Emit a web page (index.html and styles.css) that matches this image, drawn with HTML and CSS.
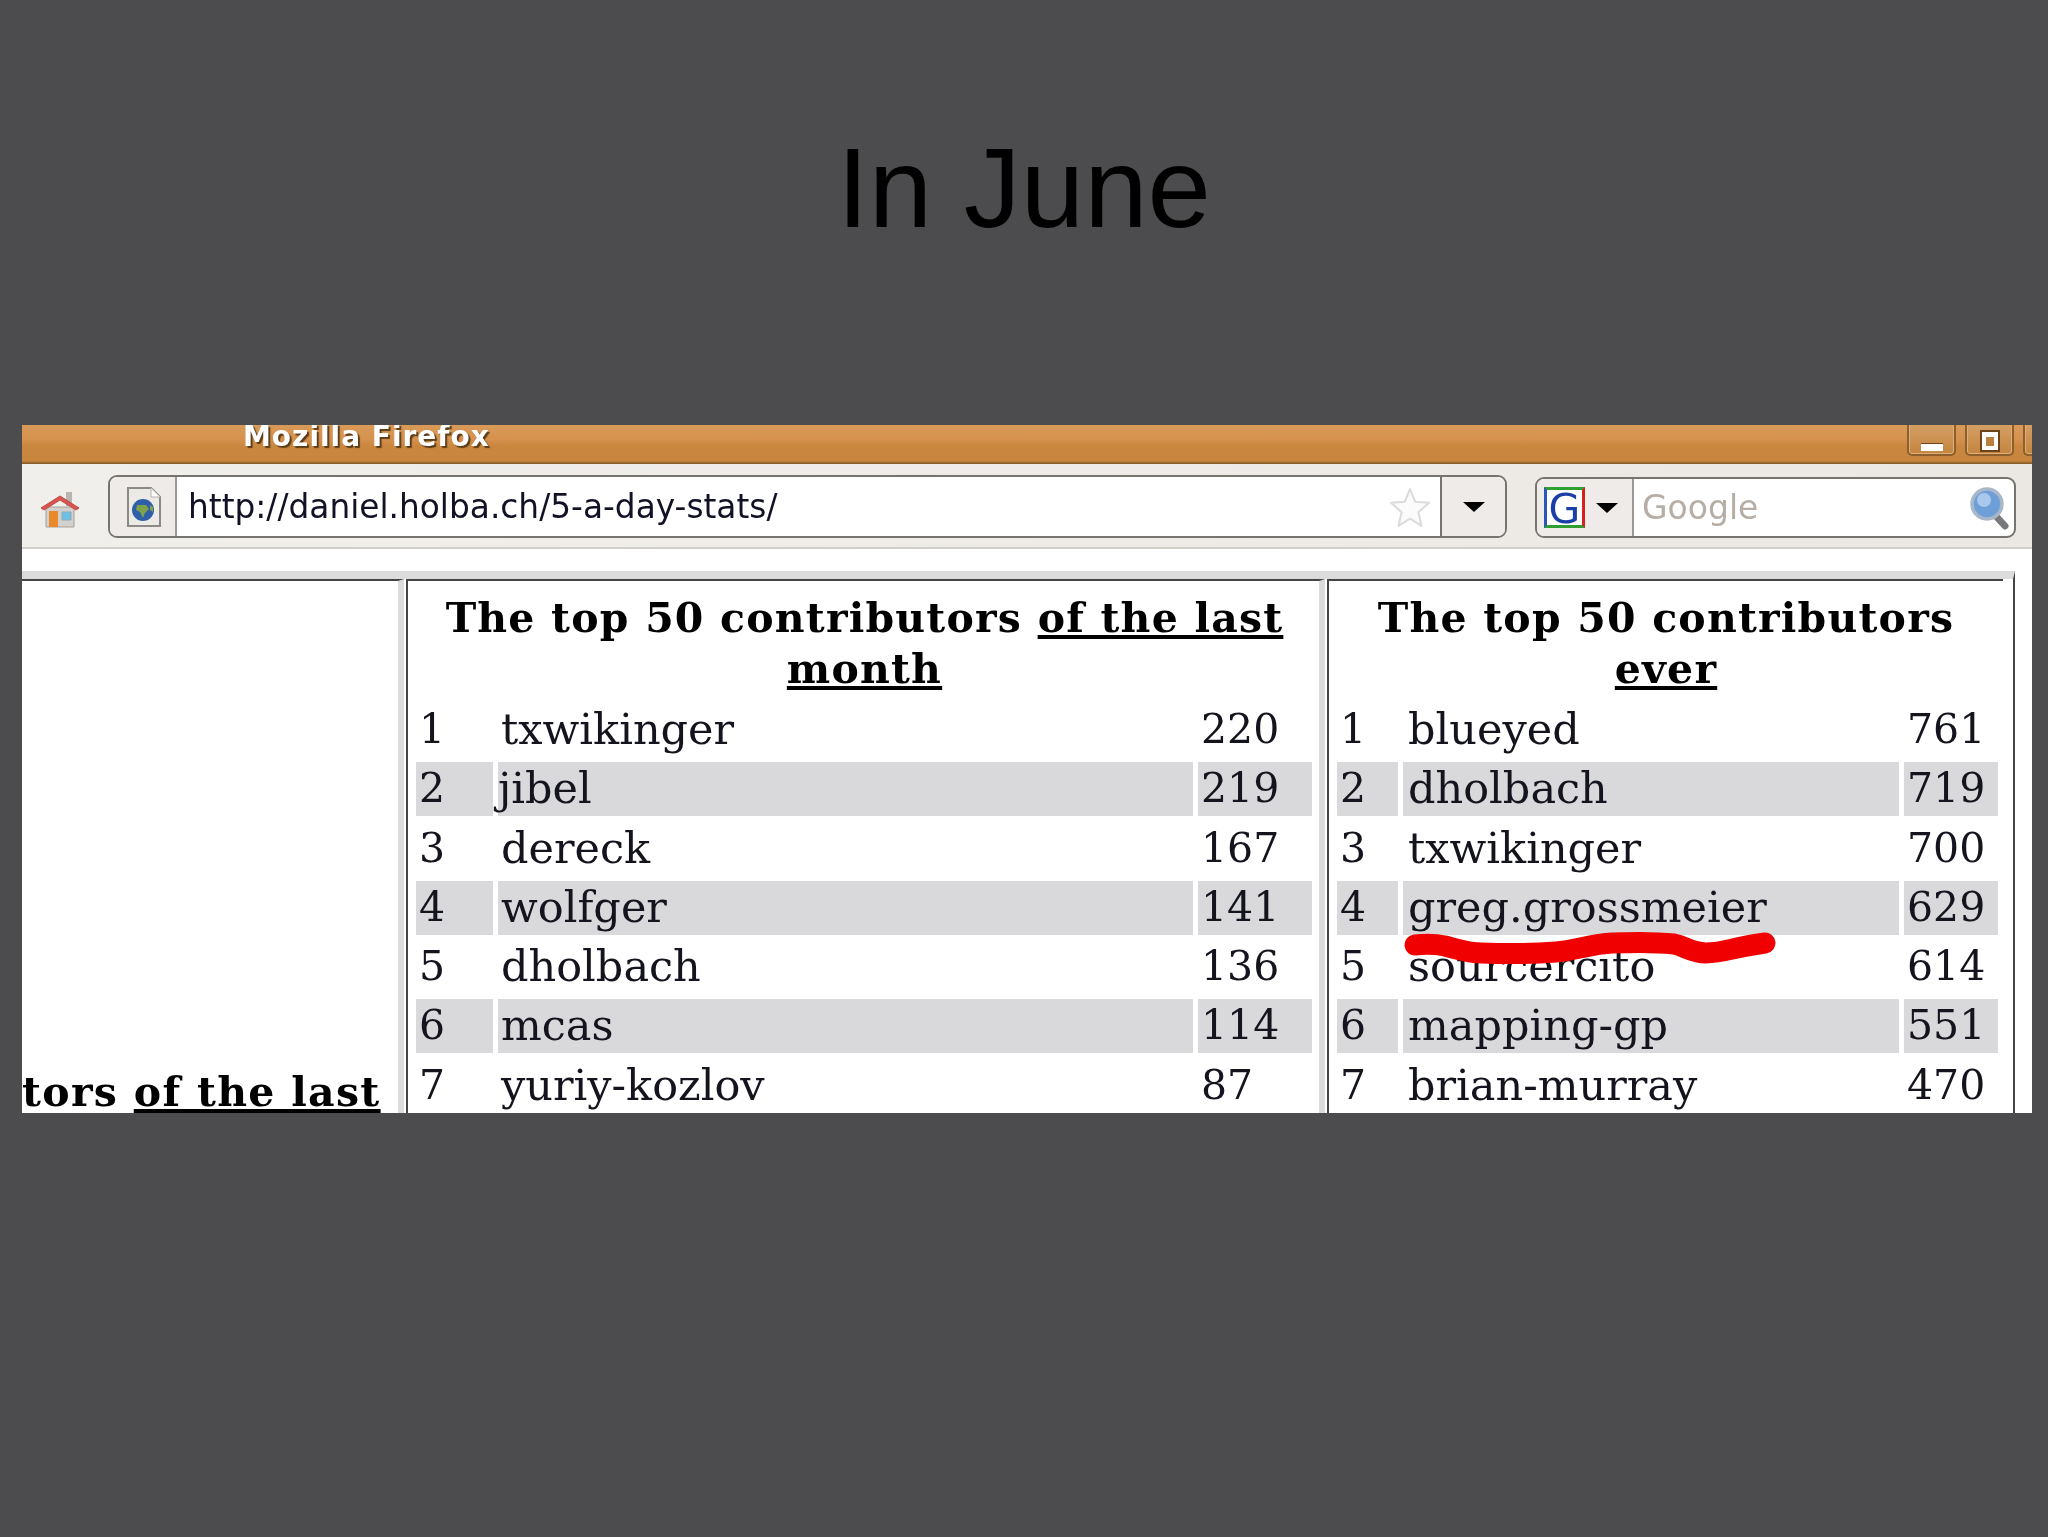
FILE: index.html
```html
<!DOCTYPE html>
<html lang="en">
<head>
<meta charset="utf-8">
<title>In June</title>
<link rel="stylesheet" href="styles.css">
</head>
<body>
<main class="slide">
  <header class="slide-head"><h1 class="slide-title">In June</h1></header>
  <section class="window">
    <div class="titlebar">
      <span class="title-text">Mozilla Firefox</span>
      <div class="win-buttons">
        <span class="win-btn"><i class="glyph-min"></i></span>
        <span class="win-btn"><i class="glyph-max"></i></span>
        <span class="win-btn win-btn-cut"></span>
      </div>
    </div>
    <div class="toolbar">
      <svg class="home" viewBox="0 0 40 38"><path fill="#b9b5ae" d="M26 1h6v14h-6z"/><path fill="#d2d0cc" stroke="#a5a29c" d="M6 16h28v20H6z"/><path fill="#e88a2a" d="M9 20h9v16H9z"/><path fill="#6cc0e4" stroke="#8fa8b8" d="M22 21h9v8h-9z"/><path fill="#d9534f" stroke="#c04a46" d="M1 17 20 5l19 12-3 2L20 9 4 19z"/></svg>
      <div class="urlbar">
        <div class="site-box">
          <svg class="site-icon" viewBox="0 0 36 40"><path fill="#eceae6" stroke="#8d8a85" stroke-width="2" d="M3 1h23l9 9v29H3z"/><path fill="#fff" stroke="#b5b2ad" d="M26 1v9h9"/><circle cx="18" cy="23" r="11" fill="#2f5fa8"/><path fill="#7ea24a" d="M12 18h9l3 4-4 4-2 5-3-6-4-2zM25 18l3 2v5l-3-2z"/></svg>
        </div>
        <span class="url-text">http://daniel.holba.ch/5-a-day-stats/</span>
        <svg class="star" viewBox="0 0 40 40"><path fill="#fbfbfb" stroke="#dcdcdc" stroke-width="2" stroke-linejoin="round" d="M20 3l5 12 13 1-10 9 3 13-11-7-11 7 3-13L2 16l13-1z"/></svg>
        <div class="drop-box"><i class="arrow"></i></div>
      </div>
      <div class="searchbar">
        <div class="engine-box">
          <span class="engine-g">G</span>
          <i class="arrow"></i>
        </div>
        <span class="search-text">Google</span>
        <svg class="lens" viewBox="0 0 42 44"><path stroke="#77797b" stroke-width="7" stroke-linecap="round" d="M26 28l11 12"/><circle cx="19" cy="18" r="15" fill="#6f9fd8" stroke="#a9b8c8" stroke-width="3.5"/><circle cx="16" cy="14" r="7" fill="#a9c8ec"/></svg>
      </div>
    </div>
    <div class="content">
      <div class="frame">
        <div class="panel-cut"><p class="cut-heading">tors <u>of the last</u></p></div>
        <div class="panel panel-month">
          <h2 class="panel-title">The top 50 contributors <u>of the last month</u></h2>
          <div class="row"><span>1</span><span class="name">txwikinger</span><span>220</span></div>
          <div class="row alt"><span>2</span><span class="name tight">jibel</span><span>219</span></div>
          <div class="row"><span>3</span><span class="name">dereck</span><span>167</span></div>
          <div class="row alt"><span>4</span><span class="name">wolfger</span><span>141</span></div>
          <div class="row"><span>5</span><span class="name">dholbach</span><span>136</span></div>
          <div class="row alt"><span>6</span><span class="name">mcas</span><span>114</span></div>
          <div class="row"><span>7</span><span class="name">yuriy-kozlov</span><span>87</span></div>
        </div>
        <div class="panel panel-ever">
          <h2 class="panel-title">The top 50 contributors <u>ever</u></h2>
          <div class="row"><span>1</span><span class="name">blueyed</span><span>761</span></div>
          <div class="row alt"><span>2</span><span class="name">dholbach</span><span>719</span></div>
          <div class="row"><span>3</span><span class="name">txwikinger</span><span>700</span></div>
          <div class="row alt"><span>4</span><span class="name">greg.grossmeier</span><span>629</span></div>
          <div class="row"><span>5</span><span class="name">sourcercito</span><span>614</span></div>
          <div class="row alt"><span>6</span><span class="name">mapping-gp</span><span>551</span></div>
          <div class="row"><span>7</span><span class="name">brian-murray</span><span>470</span></div>
          <svg class="scribble" viewBox="0 0 384 38"><path fill="none" stroke="#f00000" stroke-width="21" stroke-linecap="round" stroke-linejoin="round" d="M12 15c10-1 20-1 30 1 12 3 24 7 37 7 26 1 50 1 74-1 20-2 36-8 56-9 24-1 44-1 62 1 10 2 18 9 32 9 12 0 22-3 31-5 10-2 20-4 28-5"/></svg>
        </div>
      </div>
    </div>
  </section>
</main>
</body>
</html>
```
FILE: styles.css
```css
* { box-sizing: border-box; }
html, body { margin: 0; padding: 0; }
body { background: #4c4c4e; height: 1537px; overflow: hidden; }
.slide { display: flex; flex-direction: column; }
.slide-head { height: 425px; padding-top: 119px; }
.slide-title {
  margin: 0; text-align: center; font: 400 114px/137px "Liberation Sans", Arial, sans-serif; color: #000;
}
.window { width: 2010px; height: 688px; margin-left: 22px; overflow: hidden; background: #fff; display: flex; flex-direction: column; }
.titlebar {
  height: 39px; flex: none; position: relative; padding-left: 221px; overflow: hidden;
  background: linear-gradient(#d99a58 0, #d6924f 35%, #c9863f 55%, #c8863e 92%, #7d5426 100%);
}
.title-text {
  display: block; margin-top: -4px; font: 700 28px/32px "DejaVu Sans", sans-serif; color: #fff; letter-spacing: 1px;
  text-shadow: 2px 2px 1px #5b3d1a; filter: blur(.5px);
}
.win-buttons { position: absolute; top: -4px; right: 0; display: flex; gap: 9px; margin-right: -1px; }
.win-btn {
  width: 49px; height: 35px; border: 2px solid #8d5f2c; border-radius: 5px; display: flex; align-items: center; justify-content: center;
  background: linear-gradient(#d5a066, #c4853f); box-shadow: inset 0 0 0 1px #dfae78;
}
.win-btn-cut { width: 10px; border-right: 0; border-radius: 5px 0 0 5px; }
.glyph-min { display: block; width: 22px; height: 8px; margin-top: 16px; background: #fff; border-top: 1px solid #6b4519; }
.glyph-max { display: block; width: 18px; height: 20px; margin-top: 4px; border: 5px solid #fff; border-top-width: 6px; outline: 2px solid #6b4519; outline-offset: -1px; background: #b9803f; }
.toolbar {
  height: 85px; flex: none; display: flex; align-items: flex-start; padding: 11px 16px 0 18px;
  background: linear-gradient(90deg, #f1efec, #ebe8e4); border-bottom: 2px solid #d2cfca; filter: blur(.5px);
}
.home { width: 40px; height: 38px; margin-top: 16px; flex: none; }
.urlbar {
  margin-left: 28px; width: 1399px; height: 63px; flex: none; display: flex; align-items: center;
  background: #fff; border: 2px solid #77746f; border-radius: 9px; overflow: hidden;
}
.site-box { width: 67px; height: 100%; flex: none; display: flex; align-items: center; justify-content: center; background: #eeebe8; border-right: 2px solid #9b9893; }
.site-icon { width: 36px; height: 40px; }
.url-text { margin-left: 11px; flex: 1; font: 400 32.8px/40px "DejaVu Sans", sans-serif; color: #121226; }
.star { width: 42px; height: 42px; flex: none; margin-right: 9px; }
.drop-box { width: 65px; height: 100%; flex: none; display: flex; align-items: center; justify-content: center; background: #eeebe8; border-left: 2px solid #77746f; }
.arrow { display: block; width: 0; height: 0; border: 11px solid transparent; border-top: 10px solid #000; border-bottom: 0; }
.searchbar {
  margin-left: 28px; margin-top: 2px; width: 481px; height: 61px; flex: none; display: flex; align-items: center;
  background: #fff; border: 2px solid #77746f; border-radius: 9px; overflow: hidden;
}
.engine-box { width: 97px; height: 100%; flex: none; display: flex; align-items: center; padding-left: 7px; gap: 11px; background: #eeebe8; border-right: 2px solid #9b9893; }
.engine-g {
  width: 41px; height: 41px; flex: none; background: #fff; color: #1b3fa8; text-align: center; font: 400 41px/39px "DejaVu Sans", sans-serif;
  border: 3px solid #2a57b8; border-top-color: #2f9e33; border-bottom-color: #2f9e33; border-right-color: #d82020;
}
.search-text { margin-left: 8px; flex: 1; font: 400 33px/40px "DejaVu Sans", sans-serif; color: #b6aea6; }
.lens { width: 42px; height: 44px; flex: none; margin-right: 4px; }
.content { flex: 1; min-height: 0; padding-top: 22px; background: #fff; }
.frame {
  width: 1993px; height: 100%; display: flex; align-items: stretch; border-top: 8px solid #dcdcdc; border-right: 2px solid #444;
  font-family: "DejaVu Serif", serif; color: #14141e; filter: blur(.6px); padding-right: 6px;
}
.panel-cut { width: 382px; flex: none; display: flex; align-items: flex-end; border-top: 2px solid #444; border-right: 6px solid #dcdcdc; overflow: hidden; }
.cut-heading { margin: 0; font-size: 41px; font-weight: 700; line-height: 42px; white-space: nowrap; letter-spacing: 1.3px; color: #000; }
.panel { flex: none; position: relative; padding: 12px 8px 0; border-top: 2px solid #444; border-left: 2px solid #444; overflow: hidden; }
.panel-month { width: 919px; margin-left: 2px; border-right: 6px solid #dcdcdc; padding-right: 6px; }
.panel-ever { width: 676px; margin-left: 2px; }
.panel-title { margin: 0 0 8px; font-size: 41px; line-height: 51px; font-weight: 700; text-align: center; color: #000; letter-spacing: 1.2px; }
.row { display: grid; height: 54px; margin-bottom: 5.3px; font-size: 41px; line-height: 52px; white-space: nowrap; }
.row span { padding-left: 3px; }
.row .name { font-size: 43px; }
.panel-month .row { grid-template-columns: 77px 695px 114px; column-gap: 5px; }
.panel-ever .row { grid-template-columns: 61px 496px 94px; column-gap: 5px; }
.panel-ever .name { padding-left: 5px; }
.alt span { background: #d9d9db; }
.row .tight { padding-left: 0; }
.scribble { position: absolute; left: 74px; top: 349px; width: 384px; height: 38px; }
```
